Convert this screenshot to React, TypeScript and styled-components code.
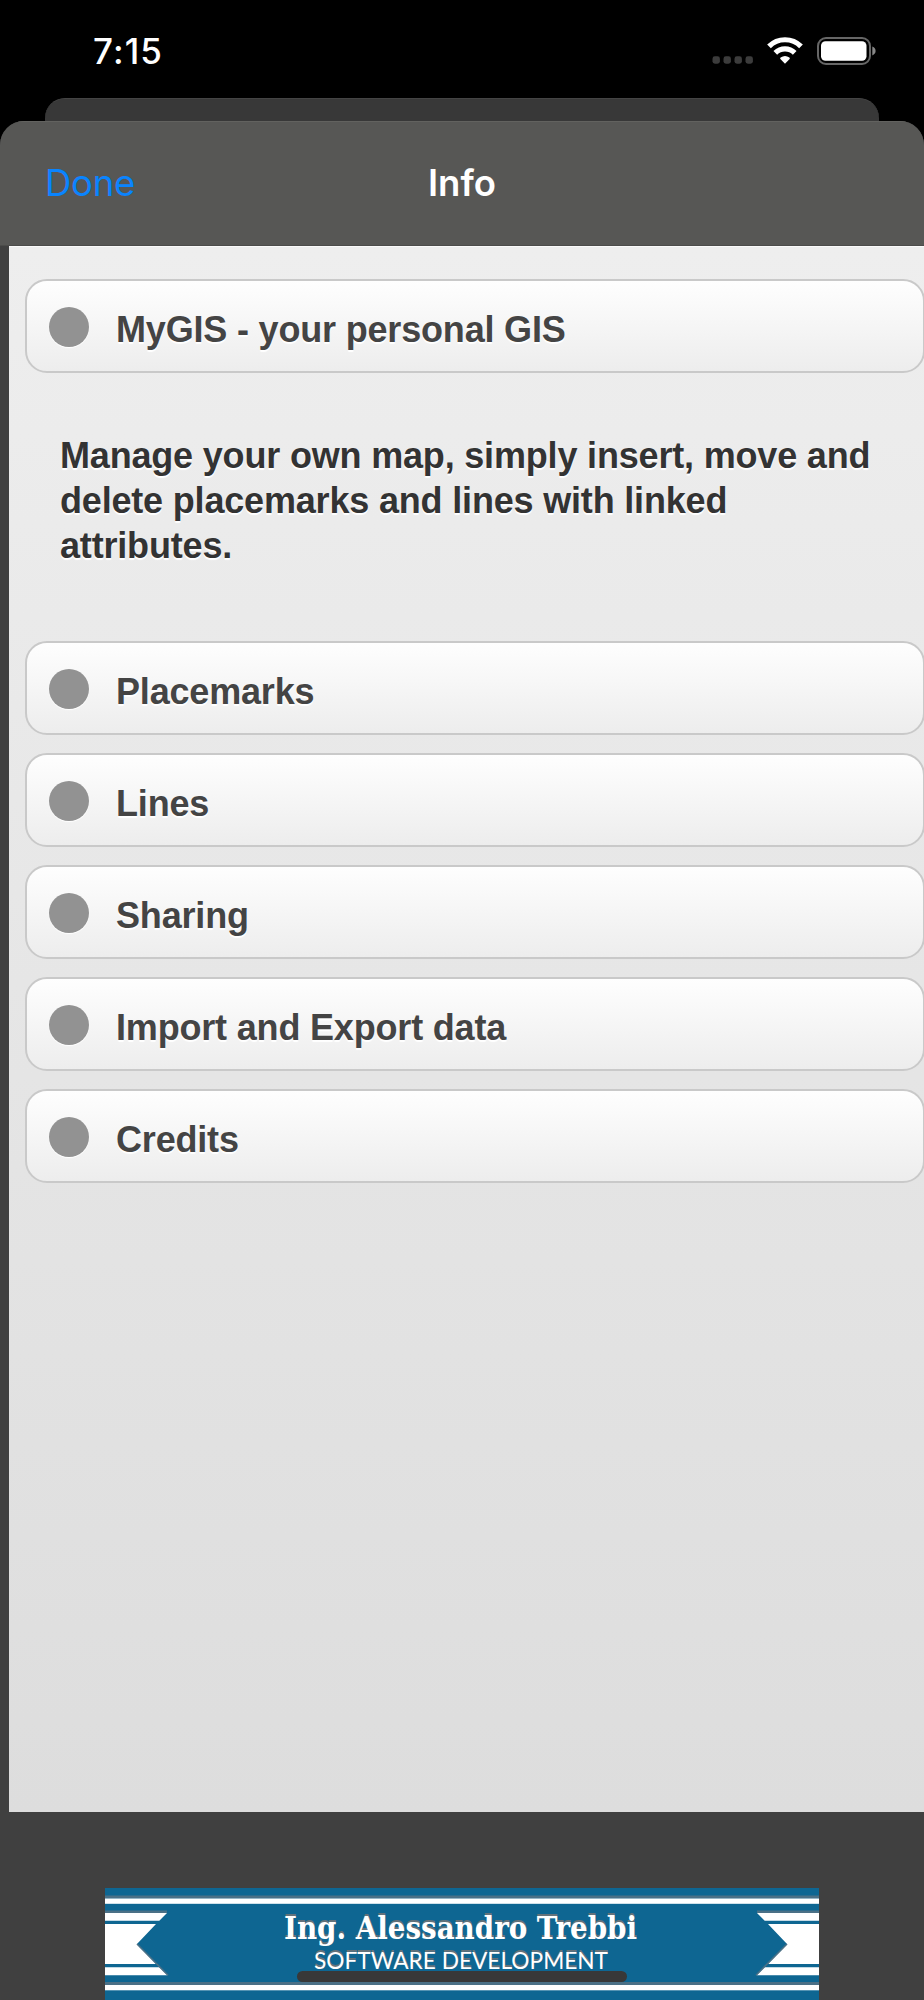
import React from "react";
import styled, { createGlobalStyle } from "styled-components";

const GlobalStyle = createGlobalStyle`
  * { box-sizing: border-box; }
  html, body { margin: 0; padding: 0; background: #000; }
  body { width: 924px; height: 2000px; overflow: hidden; }
`;

const Screen = styled.div`
  width: 924px;
  height: 2000px;
  overflow: hidden;
  display: flex;
  flex-direction: column;
  background: #000;
  font-family: "Liberation Sans", Arial, sans-serif;
`;

const StatusBar = styled.header`
  height: 98px;
  flex: none;
  display: flex;
  justify-content: space-between;
  align-items: flex-start;
  padding: 29px 47px 0 93px;
`;

const Clock = styled.time`
  font: 500 35px/44px Inter, sans-serif;
  letter-spacing: 1.1px;
  color: #fff;
`;

const StatusIcons = styled.div`
  display: flex;
  align-items: center;
  height: 44px;
`;

const BackSheet = styled.div`
  height: 23px;
  flex: none;
  margin: 0 45px;
  background: #383838;
  border-top: 1px solid #444;
  border-radius: 20px 20px 0 0;
`;

const Sheet = styled.main`
  flex: 1;
  min-height: 0;
  display: flex;
  flex-direction: column;
  background: #404040;
  border-radius: 24px 24px 0 0;
  overflow: hidden;
`;

const NavBar = styled.nav`
  height: 125px;
  flex: none;
  display: grid;
  grid-template-columns: 1fr auto 1fr;
  align-items: center;
  padding: 0 45px 2px;
  background: #575755;
  border-top: 1px solid #62625f;
  border-bottom: 1px solid #4c4c4a;
`;

const DoneButton = styled.button`
  justify-self: start;
  padding: 0;
  border: 0;
  background: none;
  color: #0a84ff;
  font: 400 36.5px/46px Inter, sans-serif;
  letter-spacing: -0.3px;
`;

const Title = styled.h1`
  margin: 0;
  color: #fff;
  font: 600 36.5px/46px Inter, sans-serif;
  letter-spacing: 0;
`;

const Page = styled.section`
  height: 1566px;
  flex: none;
  margin-left: 9px;
  padding: 32px 0 0 16px;
  background: linear-gradient(#eeeeee, #dddddd);
  border-top: 1px solid #fafafa;
  overflow: hidden;
`;

const CardList = styled.div`
  display: flex;
  flex-direction: column;
  gap: 18px;
`;

const Card = styled.div`
  width: 900px;
  height: 94px;
  display: flex;
  align-items: center;
  padding: 2px 22px 0;
  gap: 27px;
  border: 2px solid #c9c9c9;
  border-radius: 22px;
  background: linear-gradient(#fefefe, #ededed);
`;

const Dot = styled.span`
  width: 40px;
  height: 40px;
  flex: none;
  border-radius: 50%;
  background: #929292;
  box-shadow: 0 1px 1px #fff;
`;

const CardLabel = styled.span`
  padding-top: 5px;
  color: #444;
  font-size: 36px;
  line-height: 44px;
  font-weight: 700;
  letter-spacing: -0.18px;
  white-space: nowrap;
  text-shadow: 0 2px 1px #fff;
`;

const Intro = styled.p`
  width: 850px;
  margin: 60px 0 73px;
  padding-left: 35px;
  color: #333;
  font-size: 36px;
  line-height: 45px;
  font-weight: 700;
  letter-spacing: -0.18px;
  white-space: nowrap;
  text-shadow: 0 2px 1px #fff;
`;

const Footer = styled.footer`
  position: relative;
  display: flex;
  justify-content: center;
  padding-top: 76px;
`;

const HomeIndicator = styled.div`
  position: absolute;
  left: 297px;
  bottom: 18px;
  width: 330px;
  height: 11px;
  border-radius: 6px;
  background: #383838;
`;

const WifiIcon = () => (
  <svg width="36" height="28" viewBox="0 0 36 28">
    <g fill="none" stroke="#fff" strokeWidth="5.2">
      <path d="M2 9.4A22.6 22.6 0 0 1 34 9.4" />
      <path d="M8.3 15.8A13.8 13.8 0 0 1 27.7 15.8" />
    </g>
    <path
      d="M18 26.8 13.4 22.1Q12.7 21.3 13.6 20.6 18 17.5 22.4 20.6 23.3 21.3 22.6 22.1Z"
      fill="#fff"
    />
  </svg>
);

const BatteryIcon = () => (
  <svg width="60" height="28" viewBox="0 0 60 28">
    <rect x="1" y="1" width="52" height="26" rx="8" fill="none" stroke="#666" strokeWidth="2" />
    <rect x="4" y="4.3" width="45.5" height="19.4" rx="4.5" fill="#fff" />
    <path d="M55.3 9.6Q58.6 11 58.6 14T55.3 18.4Z" fill="#888" />
  </svg>
);

const SignalIcon = () => (
  <svg width="42" height="8" viewBox="0 0 42 8">
    {[0, 11, 22, 33].map((x) => (
      <rect key={x} x={x + 0.5} y="0.3" width="7.4" height="7.4" rx="2.4" fill="#3c3c3c" />
    ))}
  </svg>
);

const SignalSlot = styled.span`
  display: flex;
  align-self: flex-end;
  margin-bottom: 9.5px;
`;

const WifiSlot = styled.span`
  display: flex;
  margin: 0 14px 0 13px;
`;

const Banner = () => (
  <svg width="714" height="112" viewBox="0 0 714 112">
    <rect width="714" height="112" fill="#0e6692" />
    {[7.5, 94].map((y) => (
      <g key={y}>
        <rect y={y} width="714" height="3" fill="#4b7086" />
        <rect y={y + 3} width="714" height="5.3" fill="#fff" />
      </g>
    ))}
    {["", "translate(714 0) scale(-1 1)"].map((t) => (
      <g key={t} transform={t || undefined}>
        <path d="M0 22.5H62V25H0Z" fill="#4b7086" />
        <path d="M0 25H62L54.3 32.8H0ZM0 36H51L32 56 51 76H0ZM0 79.2H54.3L62.5 87.2H0Z" fill="#fff" />
        <path d="M32 56 63 87.2" stroke="#4b7086" strokeWidth="1.6" />
      </g>
    ))}
    <g fontFamily='"DejaVu Serif"' fontWeight="700" fontSize="31.5">
      <text x="179" y="48.6" textLength="353" lengthAdjust="spacingAndGlyphs" fill="#64727a">
        Ing. Alessandro Trebbi
      </text>
      <text
        x="179"
        y="51"
        textLength="353"
        lengthAdjust="spacingAndGlyphs"
        fill="#fff"
        aria-hidden="true"
      >
        Ing. Alessandro Trebbi
      </text>
    </g>
    <g fontFamily="Lato" fontSize="23.5">
      <text x="209" y="78.8" textLength="294" lengthAdjust="spacingAndGlyphs" fill="#64727a">
        SOFTWARE DEVELOPMENT
      </text>
      <text
        x="209"
        y="81"
        textLength="294"
        lengthAdjust="spacingAndGlyphs"
        fill="#fff"
        aria-hidden="true"
      >
        SOFTWARE DEVELOPMENT
      </text>
    </g>
  </svg>
);

const Item = ({ label }: { label: string }) => (
  <Card>
    <Dot />
    <CardLabel>{label}</CardLabel>
  </Card>
);

const topics = ["Placemarks", "Lines", "Sharing", "Import and Export data", "Credits"];

export default function App() {
  return (
    <Screen>
      <GlobalStyle />
      <StatusBar>
        <Clock>7:15</Clock>
        <StatusIcons>
          <SignalSlot>
            <SignalIcon />
          </SignalSlot>
          <WifiSlot>
            <WifiIcon />
          </WifiSlot>
          <BatteryIcon />
        </StatusIcons>
      </StatusBar>
      <BackSheet />
      <Sheet>
        <NavBar>
          <DoneButton>Done</DoneButton>
          <Title>Info</Title>
        </NavBar>
        <Page>
          <Item label="MyGIS - your personal GIS" />
          <Intro>
            Manage your own map, simply insert, move and
            <br />
            delete placemarks and lines with linked
            <br />
            attributes.
          </Intro>
          <CardList>
            {topics.map((topic) => (
              <Item key={topic} label={topic} />
            ))}
          </CardList>
        </Page>
        <Footer>
          <Banner />
          <HomeIndicator />
        </Footer>
      </Sheet>
    </Screen>
  );
}
